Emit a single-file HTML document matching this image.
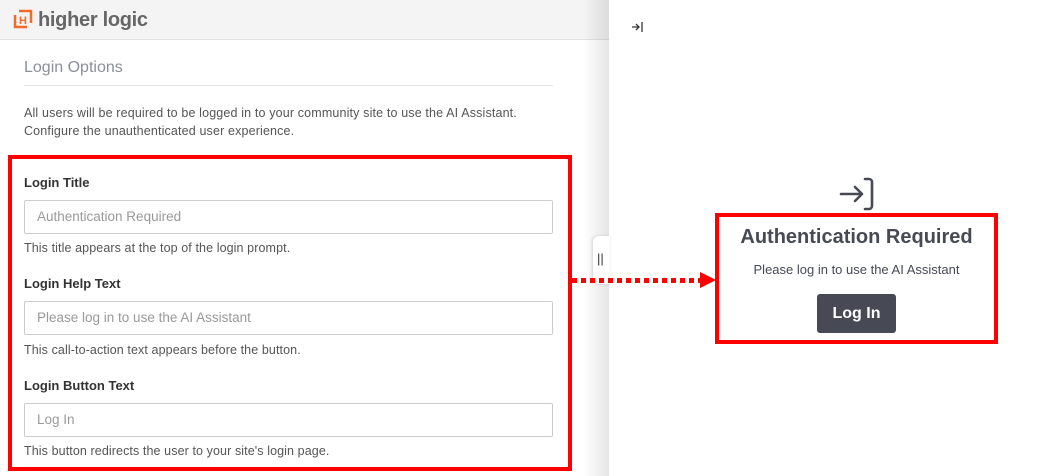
<!DOCTYPE html>
<html><head><style>
*{box-sizing:border-box;margin:0;padding:0}
body{width:1063px;height:476px;overflow:hidden;background:#fff;font-family:"Liberation Sans",sans-serif;position:relative}
.left{position:absolute;left:0;top:0;width:609px;height:476px;background:#fff}
.shadow{position:absolute;left:583px;top:0;width:26px;height:476px;background:linear-gradient(to right,rgba(0,0,0,0),rgba(0,0,0,0.1))}
.hdr{position:absolute;left:0;top:0;width:609px;height:40px;background:#f4f4f4;border-bottom:1px solid #e2e2e2}
.logo{position:absolute;left:38px;top:9px;font-size:20px;font-weight:bold;color:#666;letter-spacing:-0.3px}
.t{position:absolute;color:#555}
.red{position:absolute;border:4px solid #f00}
.lbl{position:absolute;left:24px;font-size:13px;font-weight:bold;color:#333}
.inp{position:absolute;left:24px;width:529px;height:34px;border:1px solid #ccc;border-radius:2px;font-size:13.5px;color:#999;padding:8px 12px}
.help{position:absolute;left:24px;font-size:12.5px;color:#555;letter-spacing:0.1px}
</style></head><body>
<div class="left">
<div class="hdr">
<svg style="position:absolute;left:13px;top:9px" width="20" height="20" viewBox="0 0 20 20"><path d="M2 6v12h12" fill="none" stroke="#f26b2b" stroke-width="2.5"/><path d="M6 2h12v12" fill="none" stroke="#f26b2b" stroke-width="2.5"/><text x="6" y="15" font-size="11" font-weight="bold" fill="#f26b2b" font-family="Liberation Sans">H</text></svg>
<div class="logo">higher logic</div>
</div>
<div class="t" style="left:24px;top:59px;font-size:16px;color:#8a8f99">Login Options</div>
<div style="position:absolute;left:24px;top:85px;width:529px;height:1px;background:#e5e5e5"></div>
<div class="t" style="left:24px;top:104px;font-size:12.5px;line-height:18px;letter-spacing:0.15px">All users will be required to be logged in to your community site to use the AI Assistant.<br>Configure the unauthenticated user experience.</div>
<div class="lbl" style="top:175px">Login Title</div>
<div class="inp" style="top:200px">Authentication Required</div>
<div class="help" style="top:241px">This title appears at the top of the login prompt.</div>
<div class="lbl" style="top:276px">Login Help Text</div>
<div class="inp" style="top:301px">Please log in to use the AI Assistant</div>
<div class="help" style="top:343px">This call-to-action text appears before the button.</div>
<div class="lbl" style="top:378px">Login Button Text</div>
<div class="inp" style="top:403px">Log In</div>
<div class="help" style="top:444px">This button redirects the user to your site's login page.</div>
</div>
<div class="shadow"></div>
<div class="red" style="left:8px;top:155px;width:564px;height:316px"></div>
<div style="position:absolute;left:593px;top:236px;width:17px;height:48px;background:#fff;border-radius:6px 0 0 6px;box-shadow:-1px 0 3px rgba(0,0,0,0.15);font-size:13px;color:#333;padding:15px 0 0 4px">||</div>
<div style="position:absolute;left:572px;top:278px;width:130px;height:5px;background:repeating-linear-gradient(to right,#f00 0 5px,transparent 5px 9px)"></div>
<svg style="position:absolute;left:700px;top:272px" width="16" height="16"><path d="M0 0L16 8L0 16Z" fill="#f00"/></svg>
<svg style="position:absolute;left:631px;top:21px" width="14" height="12" viewBox="0 0 14 12"><path d="M1 6h7M5 3l3 3-3 3M11 1v10" fill="none" stroke="#333" stroke-width="1.3"/></svg>
<svg style="position:absolute;left:838px;top:176px" width="38" height="36" viewBox="0 0 38 36"><path d="M3 18h21M17 11l7 7-7 7M27 3h4a3 3 0 0 1 3 3v24a3 3 0 0 1-3 3h-4" fill="none" stroke="#474a55" stroke-width="2.6" stroke-linecap="round" stroke-linejoin="round"/></svg>
<div class="red" style="left:715px;top:213px;width:283px;height:131px"></div>
<div style="position:absolute;left:715px;width:283px;top:226px;text-align:center;font-size:20px;font-weight:bold;color:#474a55">Authentication Required</div>
<div style="position:absolute;left:715px;width:283px;top:262px;text-align:center;font-size:13px;color:#474a55">Please log in to use the AI Assistant</div>
<div style="position:absolute;left:817px;top:294px;width:79px;height:39px;background:#474a55;border-radius:3px;color:#fff;font-size:16px;font-weight:bold;text-align:center;line-height:39px">Log In</div>
</body></html>
